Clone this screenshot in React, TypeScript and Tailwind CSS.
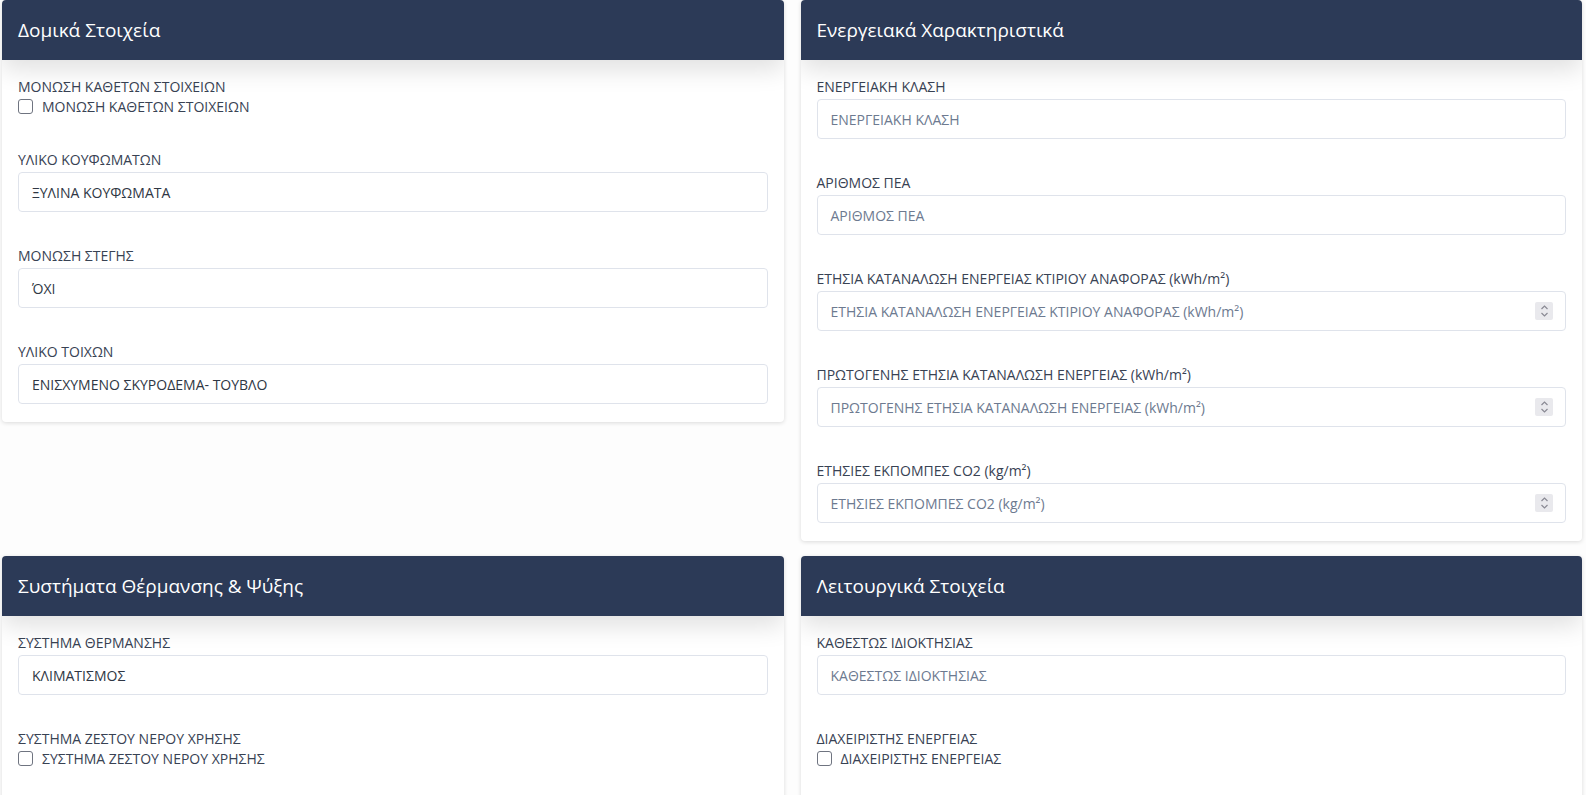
import React from 'react';

type Field =
  | { kind: 'text'; label: string; value?: string; placeholder?: string }
  | { kind: 'number'; label: string; placeholder: string }
  | { kind: 'check'; label: string };

type Section = { title: string; fields: Field[] };

const sections: Section[] = [
  {
    title: 'Δομικά Στοιχεία',
    fields: [
      { kind: 'check', label: 'ΜΟΝΩΣΗ ΚΑΘΕΤΩΝ ΣΤΟΙΧΕΙΩΝ' },
      { kind: 'text', label: 'ΥΛΙΚΟ ΚΟΥΦΩΜΑΤΩΝ', value: 'ΞΥΛΙΝΑ ΚΟΥΦΩΜΑΤΑ' },
      { kind: 'text', label: 'ΜΟΝΩΣΗ ΣΤΕΓΗΣ', value: 'ΌΧΙ' },
      { kind: 'text', label: 'ΥΛΙΚΟ ΤΟΙΧΩΝ', value: 'ΕΝΙΣΧΥΜΕΝΟ ΣΚΥΡΟΔΕΜΑ- ΤΟΥΒΛΟ' },
    ],
  },
  {
    title: 'Ενεργειακά Χαρακτηριστικά',
    fields: [
      { kind: 'text', label: 'ΕΝΕΡΓΕΙΑΚΗ ΚΛΑΣΗ', placeholder: 'ΕΝΕΡΓΕΙΑΚΗ ΚΛΑΣΗ' },
      { kind: 'text', label: 'ΑΡΙΘΜΟΣ ΠΕΑ', placeholder: 'ΑΡΙΘΜΟΣ ΠΕΑ' },
      {
        kind: 'number',
        label: 'ΕΤΗΣΙΑ ΚΑΤΑΝΑΛΩΣΗ ΕΝΕΡΓΕΙΑΣ ΚΤΙΡΙΟΥ ΑΝΑΦΟΡΑΣ (kWh/m²)',
        placeholder: 'ΕΤΗΣΙΑ ΚΑΤΑΝΑΛΩΣΗ ΕΝΕΡΓΕΙΑΣ ΚΤΙΡΙΟΥ ΑΝΑΦΟΡΑΣ (kWh/m²)',
      },
      {
        kind: 'number',
        label: 'ΠΡΩΤΟΓΕΝΗΣ ΕΤΗΣΙΑ ΚΑΤΑΝΑΛΩΣΗ ΕΝΕΡΓΕΙΑΣ (kWh/m²)',
        placeholder: 'ΠΡΩΤΟΓΕΝΗΣ ΕΤΗΣΙΑ ΚΑΤΑΝΑΛΩΣΗ ΕΝΕΡΓΕΙΑΣ (kWh/m²)',
      },
      { kind: 'number', label: 'ΕΤΗΣΙΕΣ ΕΚΠΟΜΠΕΣ CO2 (kg/m²)', placeholder: 'ΕΤΗΣΙΕΣ ΕΚΠΟΜΠΕΣ CO2 (kg/m²)' },
    ],
  },
  {
    title: 'Συστήματα Θέρμανσης & Ψύξης',
    fields: [
      { kind: 'text', label: 'ΣΥΣΤΗΜΑ ΘΕΡΜΑΝΣΗΣ', value: 'ΚΛΙΜΑΤΙΣΜΟΣ' },
      { kind: 'check', label: 'ΣΥΣΤΗΜΑ ΖΕΣΤΟΥ ΝΕΡΟΥ ΧΡΗΣΗΣ' },
    ],
  },
  {
    title: 'Λειτουργικά Στοιχεία',
    fields: [
      { kind: 'text', label: 'ΚΑΘΕΣΤΩΣ ΙΔΙΟΚΤΗΣΙΑΣ', placeholder: 'ΚΑΘΕΣΤΩΣ ΙΔΙΟΚΤΗΣΙΑΣ' },
      { kind: 'check', label: 'ΔΙΑΧΕΙΡΙΣΤΗΣ ΕΝΕΡΓΕΙΑΣ' },
    ],
  },
];

const Spinner = () => (
  <span className="flex h-[18px] w-[18px] flex-col items-center justify-center rounded-[2px] bg-[#e9e9ed]">
    <svg width="9" height="14" viewBox="0 0 9 14" fill="none" stroke="#8a8a94" strokeWidth="1.2">
      <path d="M1.5 5 L4.5 2 L7.5 5" />
      <path d="M1.5 9 L4.5 12 L7.5 9" />
    </svg>
  </span>
);

const FieldBox = ({ field }: { field: Field }) => {
  if (field.kind === 'check') {
    return (
      <div>
        <div className="text-[14px] leading-[21px] text-[#384253]">{field.label}</div>
        <label className="flex h-[19px] items-center gap-[9px] text-[14px] text-[#384253]">
          <span className="h-[15px] w-[15px] rounded-[3px] border border-[#6f7480] bg-white" />
          {field.label}
        </label>
      </div>
    );
  }
  const text = field.kind === 'text' && field.value ? field.value : field.placeholder;
  const isValue = field.kind === 'text' && !!field.value;
  return (
    <div>
      <div className="text-[14px] leading-[21px] text-[#384253]">{field.label}</div>
      <div className="mt-[2px] flex h-[40px] items-center justify-between rounded-[4px] border border-[#dfe3eb] bg-white pl-[13px] pr-[12px]">
        <span className={isValue ? 'text-[14px] text-[#2f3744]' : 'text-[14px] text-[#6d7a90]'}>{text}</span>
        {field.kind === 'number' && <Spinner />}
      </div>
    </div>
  );
};

const Card = ({ section, tall }: { section: Section; tall?: boolean }) => (
  <div className="overflow-hidden rounded-[4px] bg-white shadow-[0_1px_4px_rgba(0,0,0,0.14)]">
    <div className="relative z-10 flex h-[60px] items-center bg-[#2c3a57] px-[16px] shadow-[0_10px_24px_rgba(0,0,0,0.12)]">
      <h2 className="text-[19px] font-medium text-white">{section.title}</h2>
    </div>
    <div className={`flex flex-col gap-[33px] px-[16px] pt-[16px] ${tall ? 'pb-[60px]' : 'pb-[18px]'}`}>
      {section.fields.map((f) => (
        <FieldBox key={f.label} field={f} />
      ))}
    </div>
  </div>
);

export default function App() {
  return (
    <div className="min-h-screen bg-[#fdfdfd] pl-[2px] pr-[4px] font-['Open_Sans',sans-serif]">
      <div className="grid grid-cols-2 items-start gap-x-[17px] gap-y-[15px]">
        <Card section={sections[0]} />
        <Card section={sections[1]} />
        <Card section={sections[2]} tall />
        <Card section={sections[3]} tall />
      </div>
    </div>
  );
}
